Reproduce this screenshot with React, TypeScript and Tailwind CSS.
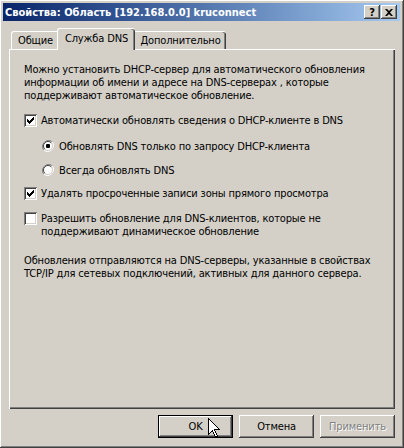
import React from "react";

const font = { fontFamily: '"DejaVu Sans Condensed", "DejaVu Sans", sans-serif' };

function Check({ on }: { on: boolean }) {
  return (
    <div className="w-[13px] h-[13px] shrink-0 bg-white shadow-[inset_1px_1px_#808080,inset_-1px_-1px_#fff,inset_2px_2px_#404040,inset_-2px_-2px_#D4D0C8] flex items-center justify-center">
      {on && (
        <svg width="7" height="7" viewBox="0 0 7 7">
          <path d="M0 2h1v1h1v1h1V3h1V2h1V1h1V0h1v3H6v1H5v1H4v1H3v1H2V6H1V5H0z" fill="#000" />
        </svg>
      )}
    </div>
  );
}

function Radio({ on }: { on: boolean }) {
  return (
    <div className="relative w-[12px] h-[12px] shrink-0">
      <svg width="12" height="12" viewBox="0 0 12 12" className="absolute inset-0">
        <path d="M10.2 1.8A6 6 0 0 0 1.8 10.2" stroke="#808080" strokeWidth="1" fill="none" />
        <path d="M1.8 10.2A6 6 0 0 0 10.2 1.8" stroke="#fff" strokeWidth="1" fill="none" />
        <circle cx="6" cy="6" r="4.5" fill="#fff" />
        <path d="M9.2 2.8A4.5 4.5 0 0 0 2.8 9.2" stroke="#404040" strokeWidth="1" fill="none" />
        <path d="M2.8 9.2A4.5 4.5 0 0 0 9.2 2.8" stroke="#D4D0C8" strokeWidth="1" fill="none" />
        {on && <rect x="4" y="4" width="4" height="4" rx="1" fill="#000" />}
      </svg>
    </div>
  );
}

const raised =
  "shadow-[inset_-1px_-1px_#404040,inset_1px_1px_#fff,inset_-2px_-2px_#808080,inset_2px_2px_#D4D0C8]";

export default function App() {
  return (
    <div
      className={`relative w-[404px] h-[448px] bg-[#D4D0C8] text-[11px] leading-[13px] text-black overflow-hidden ${raised}`}
      style={font}
    >
      {/* TITLE BAR */}
      <div className="ml-[3px] mr-[4px] mt-[3px] h-[18px] flex items-center bg-linear-to-r from-[#0A246A] to-[#A6CAF0]">
        <span className="pl-[2px] font-bold text-white whitespace-nowrap">
          Свойства: Область [192.168.0.0] kruconnect
        </span>
        <div className="ml-auto mr-[3px] flex gap-[1px]">
          <div className={`w-[16px] h-[14px] bg-[#D4D0C8] flex items-center justify-center font-bold text-[11px] ${raised}`}>
            ?
          </div>
          <div className={`w-[16px] h-[14px] bg-[#D4D0C8] flex items-center justify-center ${raised}`}>
            <svg width="8" height="7" viewBox="0 0 8 7">
              <path d="M0 0h2l2 2 2-2h2L5 3.5 8 7H6L4 5 2 7H0l3-3.5z" fill="#000" />
            </svg>
          </div>
        </div>
      </div>

      {/* TABS */}
      <div className="mt-[7px] ml-[11px] flex items-end h-[21px] tracking-[-0.15px]">
        <div className="w-[48px] h-[18px] border-l border-t border-white rounded-tl-[3px] flex items-center justify-center pb-[1px]">
          Общие
        </div>
        <div className="relative z-10 -ml-[2px] w-[78px] h-[22px] -mb-[1px] bg-[#D4D0C8] border-l border-t border-white rounded-t-[3px] shadow-[inset_-1px_0_#404040,inset_-2px_0_#808080] flex items-center justify-center pb-[3px]">
          Служба DNS
        </div>
        <div className="w-[91px] h-[18px] border-t border-white rounded-tr-[3px] shadow-[inset_-1px_0_#404040,inset_-2px_0_#808080] flex items-center justify-center pb-[1px]">
          Дополнительно
        </div>
      </div>

      {/* PANEL */}
      <div className="ml-[9px] w-[386px] h-[360px] border-l border-t border-white shadow-[inset_-1px_-1px_#404040,inset_-2px_-2px_#808080] pl-[14px] pt-[13px] tracking-[-0.15px]">
        <p className="w-[350px]">
          Можно установить DHCP-сервер для автоматического обновления информации об имени и адресе на DNS-серверах , которые поддерживают автоматическое обновление.
        </p>

        <div className="mt-[12px] flex items-center gap-[4px] h-[13px]">
          <Check on />
          <span>Автоматически обновлять сведения о DHCP-клиенте в DNS</span>
        </div>

        <div className="mt-[13px] ml-[18px] flex items-center gap-[5px] h-[12px]">
          <Radio on />
          <span>Обновлять DNS только по запросу DHCP-клиента</span>
        </div>

        <div className="mt-[12px] ml-[18px] flex items-center gap-[5px] h-[12px]">
          <Radio on={false} />
          <span>Всегда обновлять DNS</span>
        </div>

        <div className="mt-[11px] flex items-center gap-[4px] h-[13px]">
          <Check on />
          <span>Удалять просроченные записи зоны прямого просмотра</span>
        </div>

        <div className="mt-[12px] flex items-start gap-[4px]">
          <Check on={false} />
          <span>
            Разрешить обновление для DNS-клиентов, которые не
            <br />
            поддерживают динамическое обновление
          </span>
        </div>

        <p className="mt-[16px]">
          Обновления отправляются на DNS-серверы, указанные в свойствах
          <br />
          TCP/IP для сетевых подключений, активных для данного сервера.
        </p>
      </div>

      {/* BUTTONS */}
      <div className="mt-[6px] mr-[9px] flex justify-end gap-[6px] tracking-[-0.15px]">
        <div className="relative w-[75px] h-[23px] border border-black bg-[#D4D0C8] shadow-[inset_-1px_-1px_#404040,inset_1px_1px_#fff,inset_-2px_-2px_#808080] flex items-center justify-center">
          OK
          <svg
            width="12"
            height="20"
            viewBox="0 0 12 20"
            className="absolute left-[49px] top-[2px]"
          >
            <path
              d="M0.5 0.5V16.5L4.5 12.5L7.5 19.5L9.5 18.5L6.5 11.5H11.5Z"
              fill="#fff"
              stroke="#000"
              strokeWidth="1"
              shapeRendering="crispEdges"
            />
          </svg>
        </div>
        <div className={`w-[75px] h-[23px] bg-[#D4D0C8] flex items-center justify-center ${raised}`}>
          Отмена
        </div>
        <div className={`w-[75px] h-[23px] bg-[#D4D0C8] flex items-center justify-center text-[#808080] [text-shadow:1px_1px_#fff] ${raised}`}>
          Применить
        </div>
      </div>
    </div>
  );
}
